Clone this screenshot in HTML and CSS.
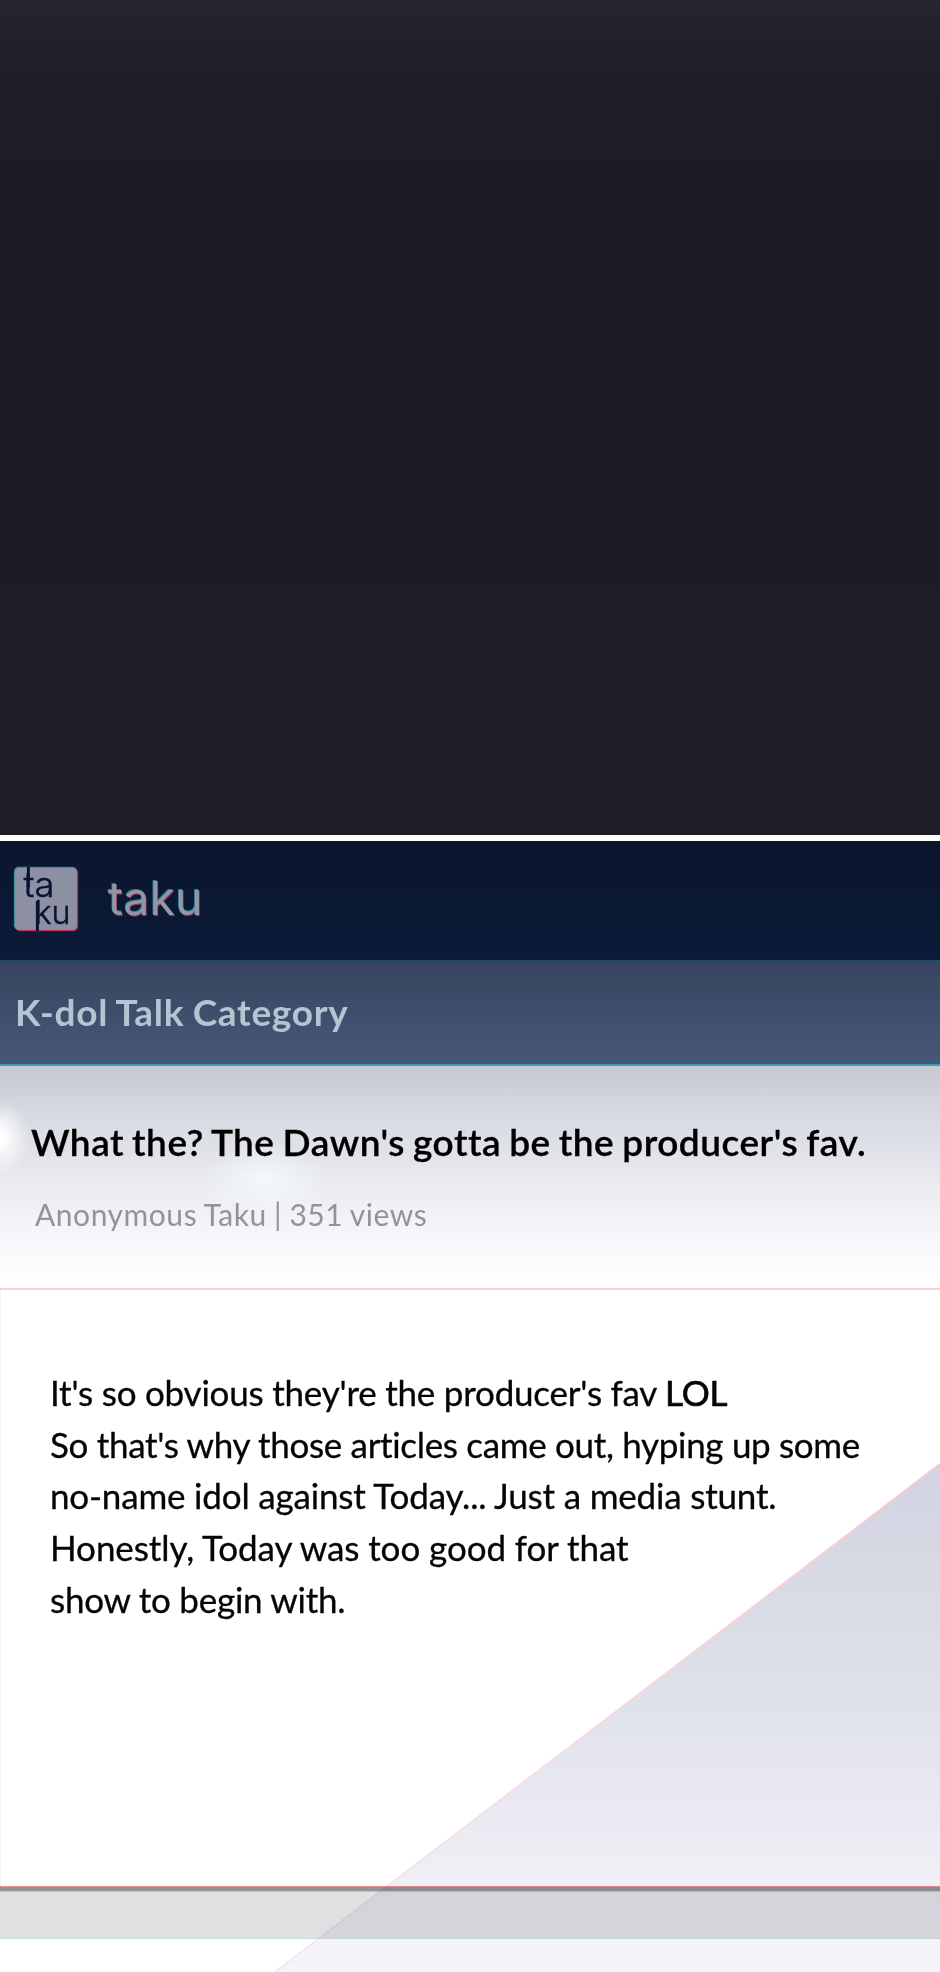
FILE: index.html
```
<!DOCTYPE html>
<html lang="en">
<head>
<meta charset="utf-8">
<title>taku</title>
<link rel="stylesheet" href="styles.css">
</head>
<body>
<main class="page">
  <div class="backdrop"></div>
  <header class="brand">
    <svg class="logo" viewBox="0 0 64 64" role="img" aria-label="taku">
      <rect class="fringe-cool" x="-.2" y="-.2" width="63.5" height="63.5" rx="5"/>
      <rect class="fringe-warm" x="1" y="1" width="63.2" height="63.2" rx="5"/>
      <rect class="tile" x=".8" y=".8" width="62.2" height="62.2" rx="4.5"/>
      <text x="9.5" y="30" font-size="35" textLength="31" lengthAdjust="spacingAndGlyphs">ta</text>
      <text x="20.5" y="57" font-size="33" textLength="36" lengthAdjust="spacingAndGlyphs">ku</text>
      <path d="M14.4 0V20M23.4 34V64"/>
    </svg>
    <span class="name">taku</span>
  </header>
  <div class="category">K-dol Talk Category</div>
  <section class="heading">
    <h1 class="title">What the? The Dawn's gotta be the producer's fav.</h1>
    <p class="meta">Anonymous Taku | 351 views</p>
  </section>
  <article class="post">
    <p class="l1">It's so obvious they're the producer's fav <span class="lol">LOL</span></p>
    <p class="l2">So that's why those articles came out, hyping up some</p>
    <p class="l3">no-name idol against Today... Just a media stunt.</p>
    <p class="l4">Honestly, Today was too good for that</p>
    <p class="l5">show to begin with.</p>
  </article>
  <div class="band"></div>
  <div class="tail"></div>
  <svg class="sheen" viewBox="0 0 665 508" preserveAspectRatio="none">
    <defs>
      <linearGradient id="sheen" x1="0" y1="0" x2="0" y2="1">
        <stop offset="0" stop-color="#d1d4e1"/>
        <stop offset=".35" stop-color="#dbdde7"/>
        <stop offset=".65" stop-color="#e7e8f1"/>
        <stop offset=".85" stop-color="#f1f1f6"/>
        <stop offset="1" stop-color="#f5f4fa"/>
      </linearGradient>
      <linearGradient id="edge" x1="0" y1="1" x2="1" y2="0">
        <stop offset="0" stop-color="#f8e9ef"/>
        <stop offset="1" stop-color="#f6c8d3"/>
      </linearGradient>
    </defs>
    <path d="M665 0V508H0Z" fill="url(#sheen)"/>
    <path d="M665 0L0 508" fill="none" stroke="url(#edge)" stroke-width="2"/>
  </svg>
</main>
</body>
</html>
```
FILE: styles.css
```
body { margin: 0; }
p, h1 { margin: 0; }
.page {
  position: relative;
  display: flex;
  flex-direction: column;
  width: 940px;
  height: 1972px;
  overflow: hidden;
  background: #fff;
  font-family: Lato, "Liberation Sans", sans-serif;
  font-variant-ligatures: none;
  white-space: nowrap;
}
.backdrop {
  height: 835px;
  flex: none;
  background: linear-gradient(#26262f 0, #212129 40px, #1e1e26 90px, #1c1c24 190px, #1c1c24 585px, #1e1e26 592px, #1e1e26 100%);
  border-bottom: 6px solid #fff;
}
.brand {
  box-sizing: border-box;
  height: 119px;
  flex: none;
  display: flex;
  padding: 26px 14px 0;
  gap: 30px;
  background: linear-gradient(#0b162d, #0c1a38);
}
.logo { width: 64px; height: 64px; flex: none; overflow: visible; font-family: Inter, "Noto Sans", sans-serif; font-weight: 300; }
.logo .fringe-cool { fill: #2a8998; }
.logo .fringe-warm { fill: #b92f58; }
.logo .tile { fill: #8d8fa2; }
.logo text { fill: #0a1430; stroke: #0a1430; stroke-width: .5; }
.logo path { fill: none; stroke: #0a1430; stroke-width: 3; }
.name {
  font: 400 46px/63px Inter, "Noto Sans", sans-serif;
  letter-spacing: .3px;
  color: #9296a6;
  text-shadow: -.8px -.6px #1d7f91, .8px .8px #a92d55;
}
.category {
  box-sizing: border-box;
  height: 106px;
  flex: none;
  padding: 0 15px;
  border-top: 1px solid #174d66;
  border-bottom: 2px solid #38a0b4;
  background: linear-gradient(#38445f, #465877);
  color: #b5c4d1;
  font-weight: 700;
  font-size: 37px;
  letter-spacing: .7px;
  word-spacing: -1.2px;
  line-height: 101px;
}
.heading {
  box-sizing: border-box;
  height: 224px;
  flex: none;
  display: flex;
  flex-direction: column;
  padding: 52px 0 0 31px;
  gap: 22px;
  border-bottom: 2px solid #f2d3dc;
  background:
    radial-gradient(ellipse 30px 38px at 0 72px, #fff 10%, #fff0),
    radial-gradient(ellipse 65px 38px at 265px 115px, #f2f9fd, #f2f9fd00),
    linear-gradient(#c6c9d2, #d5d8e1 20%, #e2e3ea 40%, #eeeef3 60%, #f8f8fc 80%, #fff);
}
.title { color: #000; font-size: 37px; font-weight: 600; line-height: 48px; letter-spacing: .5px; word-spacing: -1.6px; -webkit-text-stroke: .3px #000; }
.meta { padding-left: 4px; color: #939398; font-size: 30px; line-height: 53px; letter-spacing: .55px; word-spacing: -1px; }
.post {
  box-sizing: border-box;
  height: 597px;
  flex: none;
  padding: 77px 49px 0;
  border-left: 1px solid #eef5f6;
  color: #050505;
  font-size: 35px;
  line-height: 51.7px;
  -webkit-text-stroke: .3px #050505;
}
.l1 { letter-spacing: -.22px; }
.l2 { letter-spacing: -.32px; }
.l3 { letter-spacing: -.18px; }
.l4 { letter-spacing: -.07px; }
.l5 { letter-spacing: -.24px; }
.lol { -webkit-text-stroke-width: .7px; }
.band {
  box-sizing: border-box;
  height: 52px;
  flex: none;
  border-top: 4px solid #929496;
  border-bottom: 1px solid #c8dfe3;
  background: linear-gradient(#a8cfd5 0 1px, #e0e0e2 1px) padding-box no-repeat;
  box-shadow: 0 -1px #e88f95;
}
.tail { flex: 1; background: #fff; }
.sheen {
  position: absolute;
  right: 0;
  bottom: 0;
  width: 665px;
  height: 508px;
  mix-blend-mode: multiply;
}
```
